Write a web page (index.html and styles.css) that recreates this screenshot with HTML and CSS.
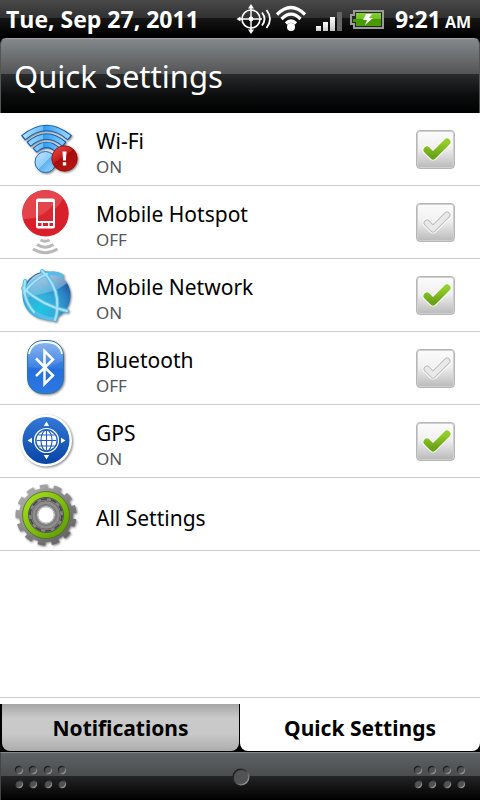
FILE: index.html
```html
<!DOCTYPE html>
<html lang="en">
<head>
    <meta charset="UTF-8">
    <meta name="viewport" content="width=device-width, initial-scale=1.0">
    <title>Quick Settings</title>
    <link rel="stylesheet" href="styles.css">
</head>
<body>
    <div class="status-bar">
        <span class="date">Tue, Sep 27, 2011</span>
        <div class="status-icons">
            <svg width="36" height="32" viewBox="0 0 36 32" fill="none" stroke="#fff">
                <circle cx="15" cy="16" r="9" stroke-width="1.6"/>
                <path d="M15 5v22M4 16h22" stroke-width="1.4"/>
                <circle cx="15" cy="16" r="2.4" fill="#fff" stroke="none"/>
                <path d="M15 1l3 4.500h-6zM15 31l3-4.500h-6zM0.500 16l4-2.500v5z" fill="#fff" stroke="none"/>
                <path d="M26 9.500q5 6.500 0 13M30.500 7q7 9 0 18" stroke-width="1.8"/>
            </svg>
            <svg width="32" height="32" viewBox="0 0 32 32" fill="none" stroke="#fff">
                <path d="M2 11.500q14-14 28 0M6.500 16q9.500-9.500 19 0M11 20.500q5-5 10 0" stroke-width="3.200"/>
                <circle cx="16" cy="24" r="4" fill="#fff" stroke="none"/>
            </svg>
            <svg class="signal" width="26" height="32" viewBox="0 0 26 32" fill="url(#bars)">
                <defs>
                    <linearGradient id="bars" x2="0" y2="1">
                        <stop offset="0" stop-color="#fff"/>
                        <stop offset="1" stop-color="#c4c4c4"/>
                    </linearGradient>
                </defs>
                <path d="M0 23h5v5H0z"/>
                <path d="M7 19h5v9H7z"/>
                <path d="M14 14h5v14h-5z"/>
                <path d="M21 9h5v19h-5z" fill="#666"/>
            </svg>
            <svg class="battery" width="34" height="32" viewBox="0 0 34 32">
                <defs>
                    <linearGradient id="charge" x2="0" y2="1">
                        <stop offset="0" stop-color="#84cf35"/>
                        <stop offset=".5" stop-color="#6fbd20"/>
                        <stop offset=".5" stop-color="#479900"/>
                        <stop offset="1" stop-color="#4b9d05"/>
                    </linearGradient>
                </defs>
                <path d="M4 8h29v17H4v-4H1v-9h3z" fill="#252525" stroke="#9b9b9b" stroke-width="2"/>
                <path d="M6 10h25v13H6v-4H3v-3h3z" fill="url(#charge)"/>
                <path d="M16 11h6l-3 4h4l-8 7 2-5h-4z" fill="#fff"/>
            </svg>
        </div>
        <span class="time">9:21 <small>AM</small></span>
    </div>

    <header class="header">
        <h1>Quick Settings</h1>
    </header>

    <main class="settings">
        <div class="row">
            <svg class="icon" viewBox="0 0 84 72" fill="none">
                <defs>
                    <linearGradient id="wave">
                        <stop offset="0" stop-color="#a9dcff"/>
                        <stop offset=".42" stop-color="#6bbdf8"/>
                        <stop offset=".42" stop-color="#2d9cf3"/>
                        <stop offset="1" stop-color="#9bd5ff"/>
                    </linearGradient>
                    <linearGradient id="ball" x2="1" y2="1">
                        <stop offset="0" stop-color="#c2e6ff"/>
                        <stop offset=".5" stop-color="#8fccfb"/>
                        <stop offset=".5" stop-color="#5db0f4"/>
                        <stop offset="1" stop-color="#a5dcff"/>
                    </linearGradient>
                    <linearGradient id="alert" x2=".7" y2="1">
                        <stop offset="0" stop-color="#e6554f"/>
                        <stop offset=".5" stop-color="#c51b18"/>
                        <stop offset=".5" stop-color="#a80b0b"/>
                        <stop offset="1" stop-color="#b81512"/>
                    </linearGradient>
                </defs>
                <g class="drop">
                    <path d="M23 25q23.500-20 47 0M28.500 31.500q18-16 36 0M34.500 37.500q12-11 24 0" stroke="#1260ac" stroke-width="6.400"/>
                    <path d="M24 24.300q22.500-18.600 45 0M29.500 30.800q17-14.600 34 0M35.500 36.800q11-10 22 0" stroke="url(#wave)" stroke-width="4.400"/>
                    <circle cx="45.500" cy="49" r="10.500" fill="url(#ball)" stroke="#1a6cb8"/>
                </g>
                <g class="drop">
                    <circle cx="64.500" cy="45.500" r="12.700" fill="url(#alert)" stroke="#930c0c" stroke-width=".8"/>
                    <path d="M62.500 38.500h4l-.6 9h-2.800zM62.800 49.300h3.400v3.200h-3.400z" fill="#fff"/>
                </g>
            </svg>
            <label class="text" for="wifi">
                <span class="name">Wi-Fi</span>
                <span class="state">ON</span>
            </label>
            <span class="check">
                <input type="checkbox" id="wifi" checked>
                <svg viewBox="0 0 39 39">
                    <defs>
                        <linearGradient id="tick" x2="0" y2="1">
                            <stop offset="0" stop-color="#93cf2b"/>
                            <stop offset="1" stop-color="#6aa315"/>
                        </linearGradient>
                    </defs>
                    <path d="M11 20l6 6 14-14"/><path class="mark" d="M11 20l6 6 14-14"/>
                </svg>
            </span>
        </div>

        <div class="row">
            <svg class="icon" viewBox="0 0 84 72" fill="none">
                <circle cx="45.500" cy="27.300" r="23.300" fill="#d91f2a"/>
                <path d="M22.200 27.300a23.300 23.300 0 0 1 41-15q-9 19-40 21z" fill="#e4454d"/>
                <rect x="36" y="12.500" width="19" height="30" rx="2" fill="#fff"/>
                <path d="M38 16h15v19H38z" fill="#db2530"/>
                <path d="M38 16h15v3q-7 9-15 11z" fill="#e4454d"/>
                <path d="M38 37h3.500v3H38zM43 37h5v3h-5zM49.500 37H53v3h-3.500z" fill="#d91f2a"/>
                <path d="M40.500 54q4.500 2.500 9 0M37 58.500q8 5.500 16.500 0M33 63q12 7.500 24.500 0" stroke="#b9b9b9" stroke-width="3"/>
            </svg>
            <label class="text" for="hotspot">
                <span class="name">Mobile Hotspot</span>
                <span class="state">OFF</span>
            </label>
            <span class="check">
                <input type="checkbox" id="hotspot">
                <svg viewBox="0 0 39 39"><path d="M11 20l6 6 14-14"/><path class="edge" d="M11 20l6 6 14-14"/><path class="mark" d="M11 20l6 6 14-14"/></svg>
            </span>
        </div>

        <div class="row">
            <svg class="icon" viewBox="0 0 84 72" fill="none">
                <defs>
                    <radialGradient id="globe" cx=".36" cy=".78" r=".8">
                        <stop offset="0" stop-color="#1cc8e2"/>
                        <stop offset=".4" stop-color="#35abd9"/>
                        <stop offset=".75" stop-color="#2c80c0"/>
                        <stop offset="1" stop-color="#17589c"/>
                    </radialGradient>
                    <linearGradient id="shine" x2=".3" y2="1">
                        <stop offset="0" stop-color="#fff" stop-opacity=".75"/>
                        <stop offset="1" stop-color="#fff" stop-opacity=".15"/>
                    </linearGradient>
                </defs>
                <g class="drop">
                    <circle cx="46.500" cy="36.500" r="24" fill="url(#globe)"/>
                    <path d="M25 30q6-16 22-17 14 0 20 11-8 7-18 9-11 3-25 6z" fill="url(#shine)"/>
                    <g stroke="#58bce8" stroke-width="4" stroke-linecap="round" stroke-linejoin="round">
                        <path d="M42 12q13 12 15 28 1 13-2 21"/>
                        <path d="M23 29q20 18 44 23"/>
                        <path d="M24 34q10-14 23-19 9-2 15 2"/>
                        <path d="M25 22q-3 18 9 31 9 7 20 7"/>
                    </g>
                    <g stroke="#a5e4fb" stroke-width="2" stroke-linecap="round">
                        <path d="M42 12q13 12 15 28 1 13-2 21"/>
                        <path d="M23 29q20 18 44 23"/>
                        <path d="M24 34q10-14 23-19"/>
                        <path d="M25 22q-3 18 9 31"/>
                    </g>
                </g>
            </svg>
            <label class="text" for="network">
                <span class="name">Mobile Network</span>
                <span class="state">ON</span>
            </label>
            <span class="check">
                <input type="checkbox" id="network" checked>
                <svg viewBox="0 0 39 39"><path d="M11 20l6 6 14-14"/><path class="mark" d="M11 20l6 6 14-14"/></svg>
            </span>
        </div>

        <div class="row">
            <svg class="icon" viewBox="0 0 84 72" fill="none">
                <defs>
                    <linearGradient id="bt" x2="0" y2="1">
                        <stop offset="0" stop-color="#8fb9f0"/>
                        <stop offset=".5" stop-color="#3f83e4"/>
                        <stop offset=".55" stop-color="#2670dd"/>
                        <stop offset="1" stop-color="#327ee8"/>
                    </linearGradient>
                </defs>
                <g class="drop">
                    <rect x="27.500" y="8.500" width="36" height="53" rx="15" fill="url(#bt)" stroke="#28789f"/>
                    <path d="M29 22q2-12 16.500-12T62 22" stroke="#fff" stroke-width="1.800"/>
                    <path d="M28 35q18 4 35-6v17q0 15-17 15T28 46z" fill="#256fdd" opacity=".5"/>
                </g>
                <path d="M36 26.500l17 17-8.500 8.500V19l8.500 8.500L36 44" stroke="#fff" stroke-width="2.500"/>
            </svg>
            <label class="text" for="bluetooth">
                <span class="name">Bluetooth</span>
                <span class="state">OFF</span>
            </label>
            <span class="check">
                <input type="checkbox" id="bluetooth">
                <svg viewBox="0 0 39 39"><path d="M11 20l6 6 14-14"/><path class="edge" d="M11 20l6 6 14-14"/><path class="mark" d="M11 20l6 6 14-14"/></svg>
            </span>
        </div>

        <div class="row">
            <svg class="icon" viewBox="0 0 84 72" fill="none">
                <defs>
                    <linearGradient id="gps-fill" x2="0" y2="1">
                        <stop offset="0" stop-color="#3478d8"/>
                        <stop offset="1" stop-color="#0745a4"/>
                    </linearGradient>
                </defs>
                <circle class="drop" cx="46" cy="35.500" r="26" fill="#fff"/>
                <circle cx="46" cy="35.500" r="23.500" fill="url(#gps-fill)"/>
                <circle cx="46.500" cy="35.500" r="12" stroke="#fff" stroke-width="1.200"/>
                <circle cx="46.500" cy="35.500" r="10" fill="#fff"/>
                <g stroke="#1d5dbb" stroke-width="1.100">
                    <path d="M46.500 25.500v20M36.500 35.500h20M38.500 30h16M38.500 41h16"/>
                    <ellipse cx="46.500" cy="35.500" rx="5.500" ry="10.500"/>
                </g>
                <path d="M46.500 16.500l2.700 4.500h-5.400zM46.500 54.500l2.700-4.500h-5.400zM27.500 35.500l4.500-2.700v5.400zM65.500 35.500l-4.500-2.700v5.400z" fill="#fff"/>
            </svg>
            <label class="text" for="gps">
                <span class="name">GPS</span>
                <span class="state">ON</span>
            </label>
            <span class="check">
                <input type="checkbox" id="gps" checked>
                <svg viewBox="0 0 39 39"><path d="M11 20l6 6 14-14"/><path class="mark" d="M11 20l6 6 14-14"/></svg>
            </span>
        </div>

        <a class="row" href="#">
            <svg class="icon" viewBox="0 0 84 72" fill="none">
                <defs>
                    <linearGradient id="metal" x2="1" y2="1">
                        <stop offset="0" stop-color="#b5b5b5"/>
                        <stop offset=".5" stop-color="#858585"/>
                        <stop offset="1" stop-color="#5c5c5c"/>
                    </linearGradient>
                    <linearGradient id="lime" x2="1" y2="1">
                        <stop offset="0" stop-color="#a6e01c"/>
                        <stop offset="1" stop-color="#5a9c00"/>
                    </linearGradient>
                </defs>
                <g class="drop">
                    <circle cx="46" cy="37" r="27" fill="url(#metal)"/>
                    <circle cx="46" cy="37" r="28" stroke="url(#metal)" stroke-width="5" stroke-dasharray="7.500 6.033" transform="rotate(8 46 37)"/>
                </g>
                <circle cx="46" cy="37" r="26" fill="url(#metal)"/>
                <circle cx="46" cy="37" r="20.500" stroke="url(#lime)" stroke-width="5.500"/>
                <circle cx="46" cy="37" r="23.500" stroke="#4f6d19" stroke-width=".8"/>
                <circle cx="46" cy="37" r="17.500" fill="#868686" stroke="#555"/>
                <circle cx="46" cy="37" r="16" stroke="#444" stroke-width="1.600" stroke-dasharray="6 4"/>
                <circle cx="46" cy="37" r="11.500" stroke="#8d8d8d" stroke-width="6" fill="#fff"/>
                <circle cx="46" cy="37" r="14.200" stroke="#606060" stroke-width=".8"/>
                <circle cx="46" cy="37" r="10.500" stroke="#747474"/>
                <circle cx="46" cy="37" r="8" fill="#fff" stroke="#c5c5c5"/>
            </svg>
            <span class="text">
                <span class="name">All Settings</span>
            </span>
        </a>
    </main>

    <nav class="tabs">
        <button type="button" class="tab">Notifications</button>
        <button type="button" class="tab active">Quick Settings</button>
    </nav>

    <div class="handle">
        <svg width="54" height="24" viewBox="0 0 54 24">
            <defs>
                <linearGradient id="hole" x2="1" y2="1">
                    <stop offset="0" stop-color="#050505"/>
                    <stop offset=".5" stop-color="#444"/>
                    <stop offset="1" stop-color="#bbb"/>
                </linearGradient>
                <g id="holes" fill="#505254" stroke="url(#hole)" stroke-width="1.400">
                    <circle cx="5" cy="5" r="3.500"/>
                    <circle cx="19" cy="5" r="3.500"/>
                    <circle cx="34" cy="5" r="3.500"/>
                    <circle cx="48" cy="5" r="3.500"/>
                    <circle cx="5" cy="19" r="3.500"/>
                    <circle cx="19" cy="19" r="3.500"/>
                    <circle cx="34" cy="19" r="3.500"/>
                    <circle cx="48" cy="19" r="3.500"/>
                </g>
            </defs>
            <use href="#holes"/>
        </svg>
        <svg width="18" height="18" viewBox="0 0 18 18">
            <circle cx="9" cy="9" r="7.800" fill="#505356" stroke="url(#hole)" stroke-width="1.400"/>
        </svg>
        <svg width="54" height="24" viewBox="0 0 54 24"><use href="#holes"/></svg>
    </div>
</body>
</html>
```
FILE: styles.css
```css
* {
    margin: 0;
    padding: 0;
    box-sizing: border-box;
}
body {
    font-family: 'Noto Sans', 'Open Sans', sans-serif;
    background: #fff;
    color: #000;
    min-height: 100vh;
    display: flex;
    flex-direction: column;
}
svg {
    display: block;
    flex: none;
}

/* status bar */
.status-bar {
    display: flex;
    align-items: center;
    height: 38px;
    padding: 0 9px 0 6px;
    color: #fff;
    font-family: 'Open Sans', 'Noto Sans', sans-serif;
    font-size: 23px;
    font-weight: bold;
    white-space: nowrap;
    background: linear-gradient(#4a4a4a, #303030 18px, #161616 18px, #000 36px);
}
.status-icons {
    display: flex;
    align-items: center;
    margin-left: auto;
    gap: 3px;
}
.signal {
    margin-left: 6px;
}
.battery {
    margin-left: 5px;
}
.time {
    margin-left: 11px;
}
.time small {
    font-size: 16px;
    margin-left: -2px;
}

/* title */
.header {
    background: #000;
}
.header h1 {
    height: 75px;
    padding: 0 13px;
    font-size: 31px;
    font-weight: normal;
    line-height: 74px;
    color: #fff;
    border-top: 1px solid #a5a5a5;
    border-left: 1px solid #555;
    border-right: 1px solid #555;
    border-radius: 6px 6px 0 0;
    background: linear-gradient(#85898b, #535456 35px, #292a2c 35px, #0c0d0e 56px, #000);
}

/* list */
.settings {
    flex: 1;
}
.row {
    display: flex;
    align-items: center;
    min-height: 73px;
    padding-right: 25px;
    border-bottom: 1px solid #ccc;
    color: #000;
    text-decoration: none;
}
.icon {
    width: 84px;
    height: 72px;
    margin-right: 12px;
}
.drop {
    filter: drop-shadow(1px 1px 1px rgba(0, 0, 0, 0.5));
}
.text {
    flex: 1;
    display: flex;
    flex-direction: column;
    padding-top: 8px;
}
.name {
    font-size: 21px;
    line-height: 28px;
}
.state {
    font-size: 17px;
    line-height: 24px;
    color: #555;
}

/* tick boxes */
.check {
    display: grid;
}
.check input,
.check svg {
    grid-area: 1 / 1;
    width: 39px;
    height: 39px;
}
.check input {
    appearance: none;
    border: 1px solid #b5b5b5;
    border-radius: 4px;
    background: linear-gradient(#fcfcfc, #f0f0f0 45%, #b9b9b9);
    box-shadow: inset 0 0 0 1px #d0d0d0;
}
.check svg {
    pointer-events: none;
    fill: none;
    stroke: #fff;
    stroke-width: 9px;
    stroke-linecap: round;
    stroke-linejoin: round;
}
.check .edge {
    stroke: #bbb;
    stroke-width: 7px;
}
.check .mark {
    stroke: #e9e9e9;
    stroke-width: 5px;
}
.check input:checked + svg .mark {
    stroke: url(#tick);
    stroke-width: 7px;
}

/* tabs */
.tabs {
    display: grid;
    grid-template-columns: 1fr 1fr;
    border-top: 1px solid #ccc;
    border-bottom: 1px solid #000;
    background: linear-gradient(#fff 6px, #000 6px);
}
.tab {
    height: 47px;
    margin: 6px 1px 0 2px;
    font-family: inherit;
    font-size: 21px;
    font-weight: bold;
    border: none;
    border-radius: 0 0 8px 8px;
    background: linear-gradient(#a5a5a5, #cacaca 14px, #c8c8c8 30px, #adadad);
    cursor: pointer;
}
.tab.active {
    margin-left: 0;
    margin-right: 0;
    background: #fff;
}

/* bottom handle */
.handle {
    display: flex;
    align-items: center;
    justify-content: space-between;
    height: 48px;
    padding: 0 13px;
    border-top: 1px solid #85888a;
    border-left: 1px solid #444;
    background: linear-gradient(#5f6366, #4a4c4e 23px, #242527 23px, #000);
}
```
